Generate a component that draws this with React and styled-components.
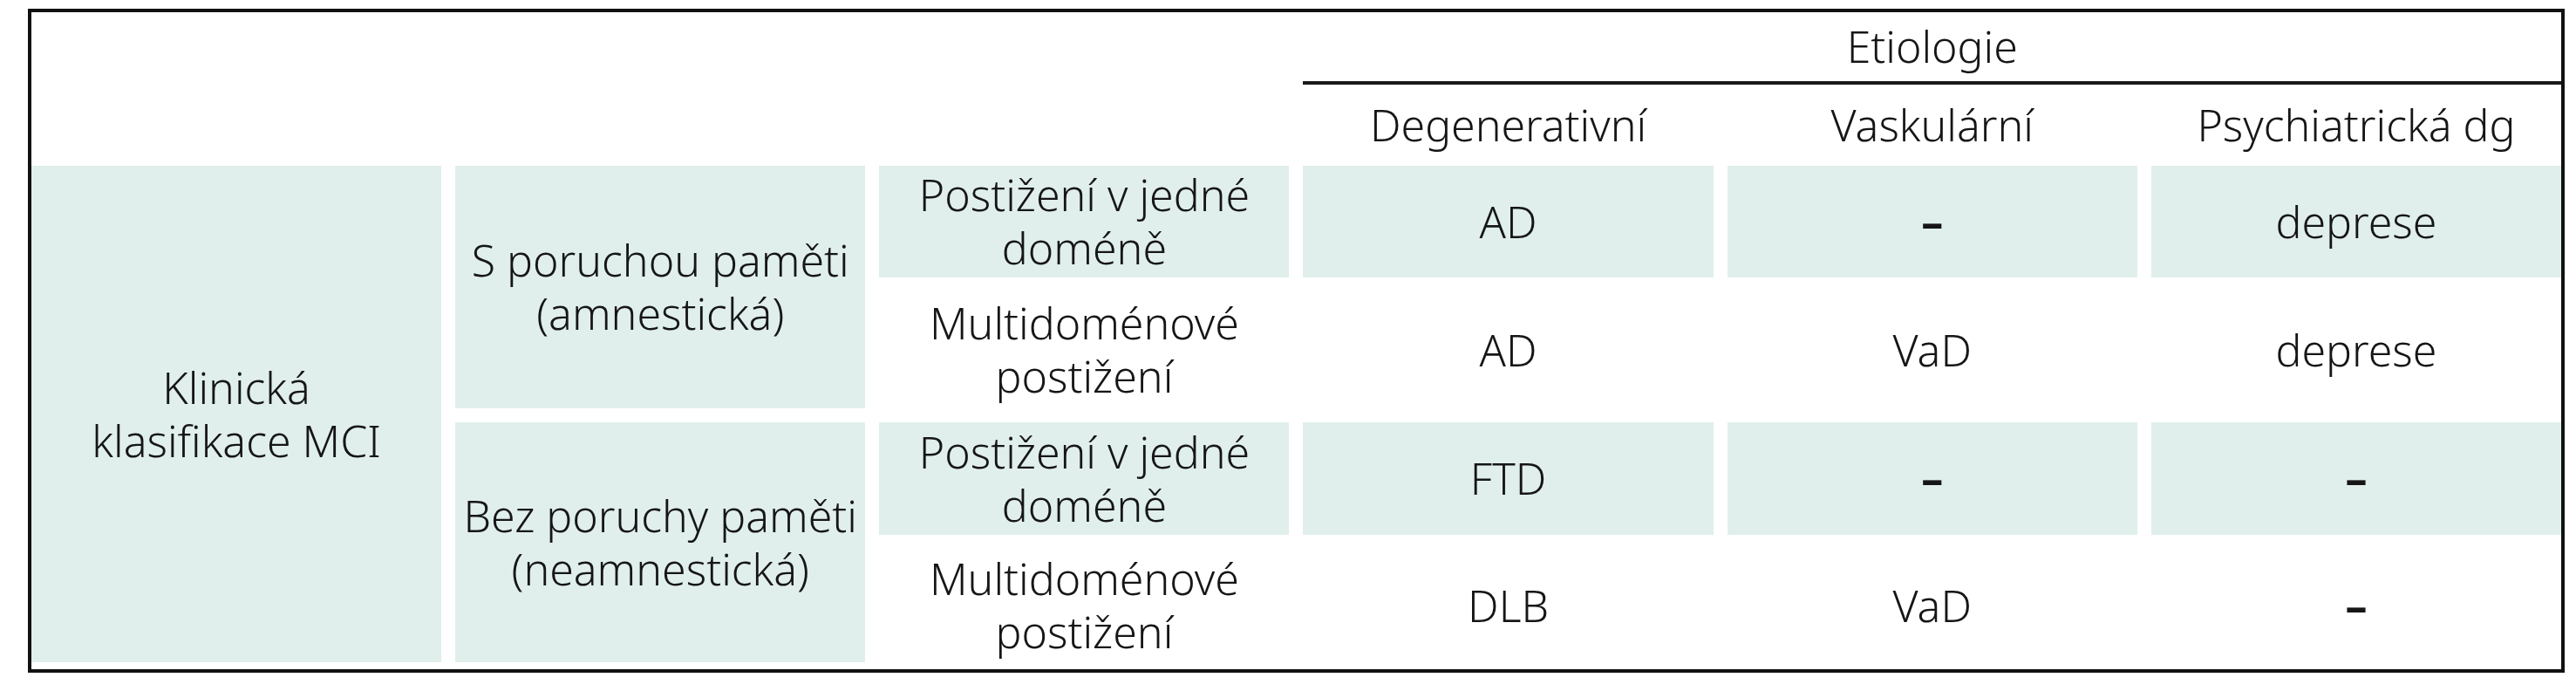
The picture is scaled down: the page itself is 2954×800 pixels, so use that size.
import styled, { createGlobalStyle } from "styled-components";

const GlobalStyle = createGlobalStyle`
  html, body {
    margin: 0;
    background: #ffffff;
  }
`;

const Page = styled.div`
  padding: 10px 13px 0 32px;
  font-family: "Noto Sans", "Liberation Sans", sans-serif;
  font-weight: 350;
  color: #161616;
`;

const Table = styled.div`
  display: grid;
  grid-template-columns: repeat(6, 1fr);
  grid-template-rows: 83px 61px 128px 134px 129px 130px;
  gap: 16px;
  padding-bottom: 8px;
  border: 4px solid #111111;
  font-size: 50px;
  line-height: 61px;
`;

const Cell = styled.div`
  display: flex;
  flex-direction: column;
  align-items: center;
  justify-content: center;
  text-align: center;
  grid-column: ${(p) => p.$col} / span ${(p) => p.$colSpan || 1};
  grid-row: ${(p) => p.$row} / span ${(p) => p.$rowSpan || 1};
  background: ${(p) => (p.$shaded ? "#e0efec" : "transparent")};
`;

const GroupHead = styled(Cell)`
  border-bottom: 4px solid #1a1a1a;
`;

const Line = styled.div`
  height: 61px;
  white-space: nowrap;
`;

const Dash = styled.span`
  font-weight: 700;
`;

const columns = ["Degenerativní", "Vaskulární", "Psychiatrická dg"];

const rows = [
  { label: ["Postižení v jedné", "doméně"], values: ["AD", "–", "deprese"], shaded: true },
  { label: ["Multidoménové", "postižení"], values: ["AD", "VaD", "deprese"], shaded: false },
  { label: ["Postižení v jedné", "doméně"], values: ["FTD", "–", "–"], shaded: true },
  { label: ["Multidoménové", "postižení"], values: ["DLB", "VaD", "–"], shaded: false },
];

const groups = [
  ["S poruchou paměti", "(amnestická)"],
  ["Bez poruchy paměti", "(neamnestická)"],
];

const Lines = ({ lines }) =>
  lines.map((line, i) => <Line key={i}>{line}</Line>);

const Value = ({ v }) => (v === "–" ? <Dash>–</Dash> : v);

const App = () => {
  return (
    <Page>
      <GlobalStyle />
      <Table>
        <GroupHead $col={4} $colSpan={3} $row={1}>
          Etiologie
        </GroupHead>
        {columns.map((c, i) => (
          <Cell key={c} $col={4 + i} $row={2}>
            {c}
          </Cell>
        ))}

        <Cell $col={1} $row={3} $rowSpan={4} $shaded>
          <Lines lines={["Klinická", "klasifikace MCI"]} />
        </Cell>

        {groups.map((g, i) => (
          <Cell key={i} $col={2} $row={3 + i * 2} $rowSpan={2} $shaded>
            <Lines lines={g} />
          </Cell>
        ))}

        {rows.map((r, i) => [
          <Cell key={`l${i}`} $col={3} $row={3 + i} $shaded={r.shaded}>
            <Lines lines={r.label} />
          </Cell>,
          ...r.values.map((v, j) => (
            <Cell key={`v${i}-${j}`} $col={4 + j} $row={3 + i} $shaded={r.shaded}>
              <Value v={v} />
            </Cell>
          )),
        ])}
      </Table>
    </Page>
  );
};

export default App;
